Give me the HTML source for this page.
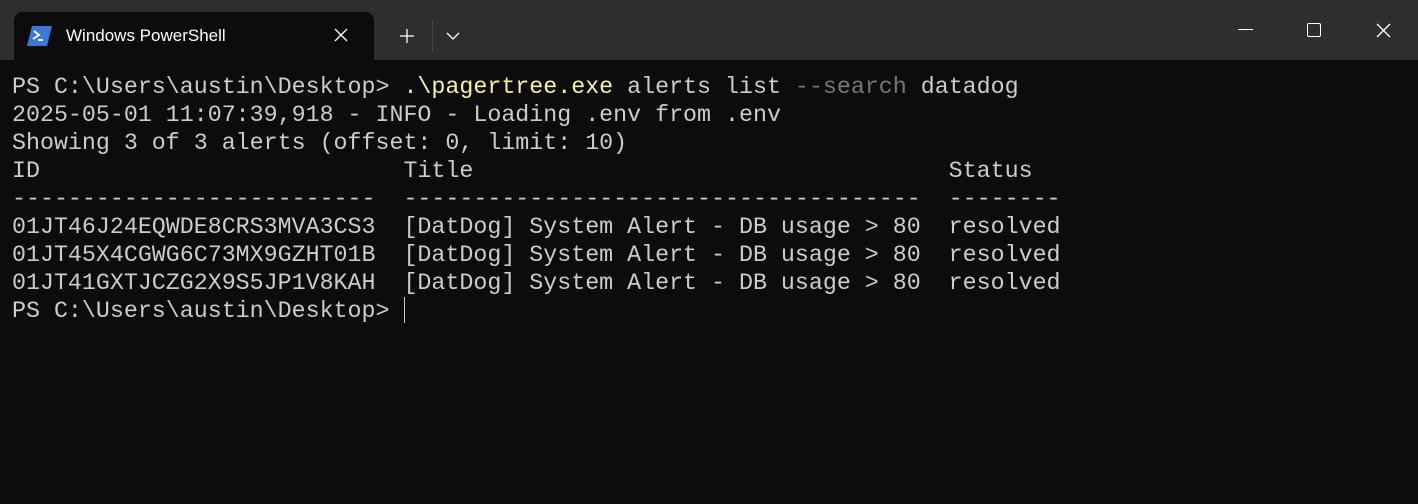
<!DOCTYPE html>
<html><head><style>
body{margin:0;width:1418px;height:504px;background:#0c0c0c;overflow:hidden;font-family:"Liberation Sans",sans-serif;position:relative}
.bar{position:absolute;left:0;top:0;width:1418px;height:60px;background:#2e2e2e}
.tab{position:absolute;left:14px;top:12px;width:360px;height:48px;background:#0c0c0c;border-radius:8px 8px 0 0}
.tt{position:absolute;left:52px;top:14px;color:#fff;font-size:17px}
pre{position:absolute;left:12px;top:73px;margin:0;font-family:"Liberation Mono",monospace;font-size:23.3px;line-height:28px;color:#cccccc;letter-spacing:0}
.y{color:#f9f1a5}.g{color:#767676}
</style></head><body>
<div class="bar"></div>
<div class="tab">
<svg style="position:absolute;left:13px;top:14px" width="26" height="20" viewBox="0 0 26 20"><path d="M5 0H25L20 20H0Z" fill="#3c78d8"/><path d="M7 5L12 9L6 13" stroke="#fff" stroke-width="1.8" fill="none"/><path d="M11 14H16" stroke="#fff" stroke-width="1.8"/></svg>
<div class="tt">Windows PowerShell</div>
<svg style="position:absolute;left:320px;top:16px" width="14" height="14"><path d="M1 1L13 13M13 1L1 13" stroke="#fff" stroke-width="1.3"/></svg>
</div>
<svg style="position:absolute;left:399px;top:28px" width="16" height="16"><path d="M8 1V15M1 8H15" stroke="#fff" stroke-width="1.3"/></svg>
<div style="position:absolute;left:432px;top:19px;width:1px;height:34px;background:#444"></div>
<svg style="position:absolute;left:446px;top:31px" width="14" height="10"><path d="M1 2L7 8L13 2" stroke="#fff" stroke-width="1.3" fill="none"/></svg>
<div style="position:absolute;left:1238px;top:29px;width:15px;height:1px;background:#fff"></div>
<div style="position:absolute;left:1307px;top:23px;width:12px;height:12px;border:1.3px solid #fff;border-radius:2px"></div>
<svg style="position:absolute;left:1376px;top:23px" width="15" height="15"><path d="M1 1L14 14M14 1L1 14" stroke="#fff" stroke-width="1.3"/></svg>
<pre>PS C:\Users\austin\Desktop> <span class="y">.\pagertree.exe</span> alerts list <span class="g">--search</span> datadog
2025-05-01 11:07:39,918 - INFO - Loading .env from .env
Showing 3 of 3 alerts (offset: 0, limit: 10)
ID                          Title                                  Status
--------------------------  -------------------------------------  --------
01JT46J24EQWDE8CRS3MVA3CS3  [DatDog] System Alert - DB usage > 80  resolved
01JT45X4CGWG6C73MX9GZHT01B  [DatDog] System Alert - DB usage > 80  resolved
01JT41GXTJCZG2X9S5JP1V8KAH  [DatDog] System Alert - DB usage > 80  resolved
PS C:\Users\austin\Desktop> </pre>
<div style="position:absolute;left:404px;top:297px;width:1px;height:26px;background:#ccc"></div>
</body></html>
